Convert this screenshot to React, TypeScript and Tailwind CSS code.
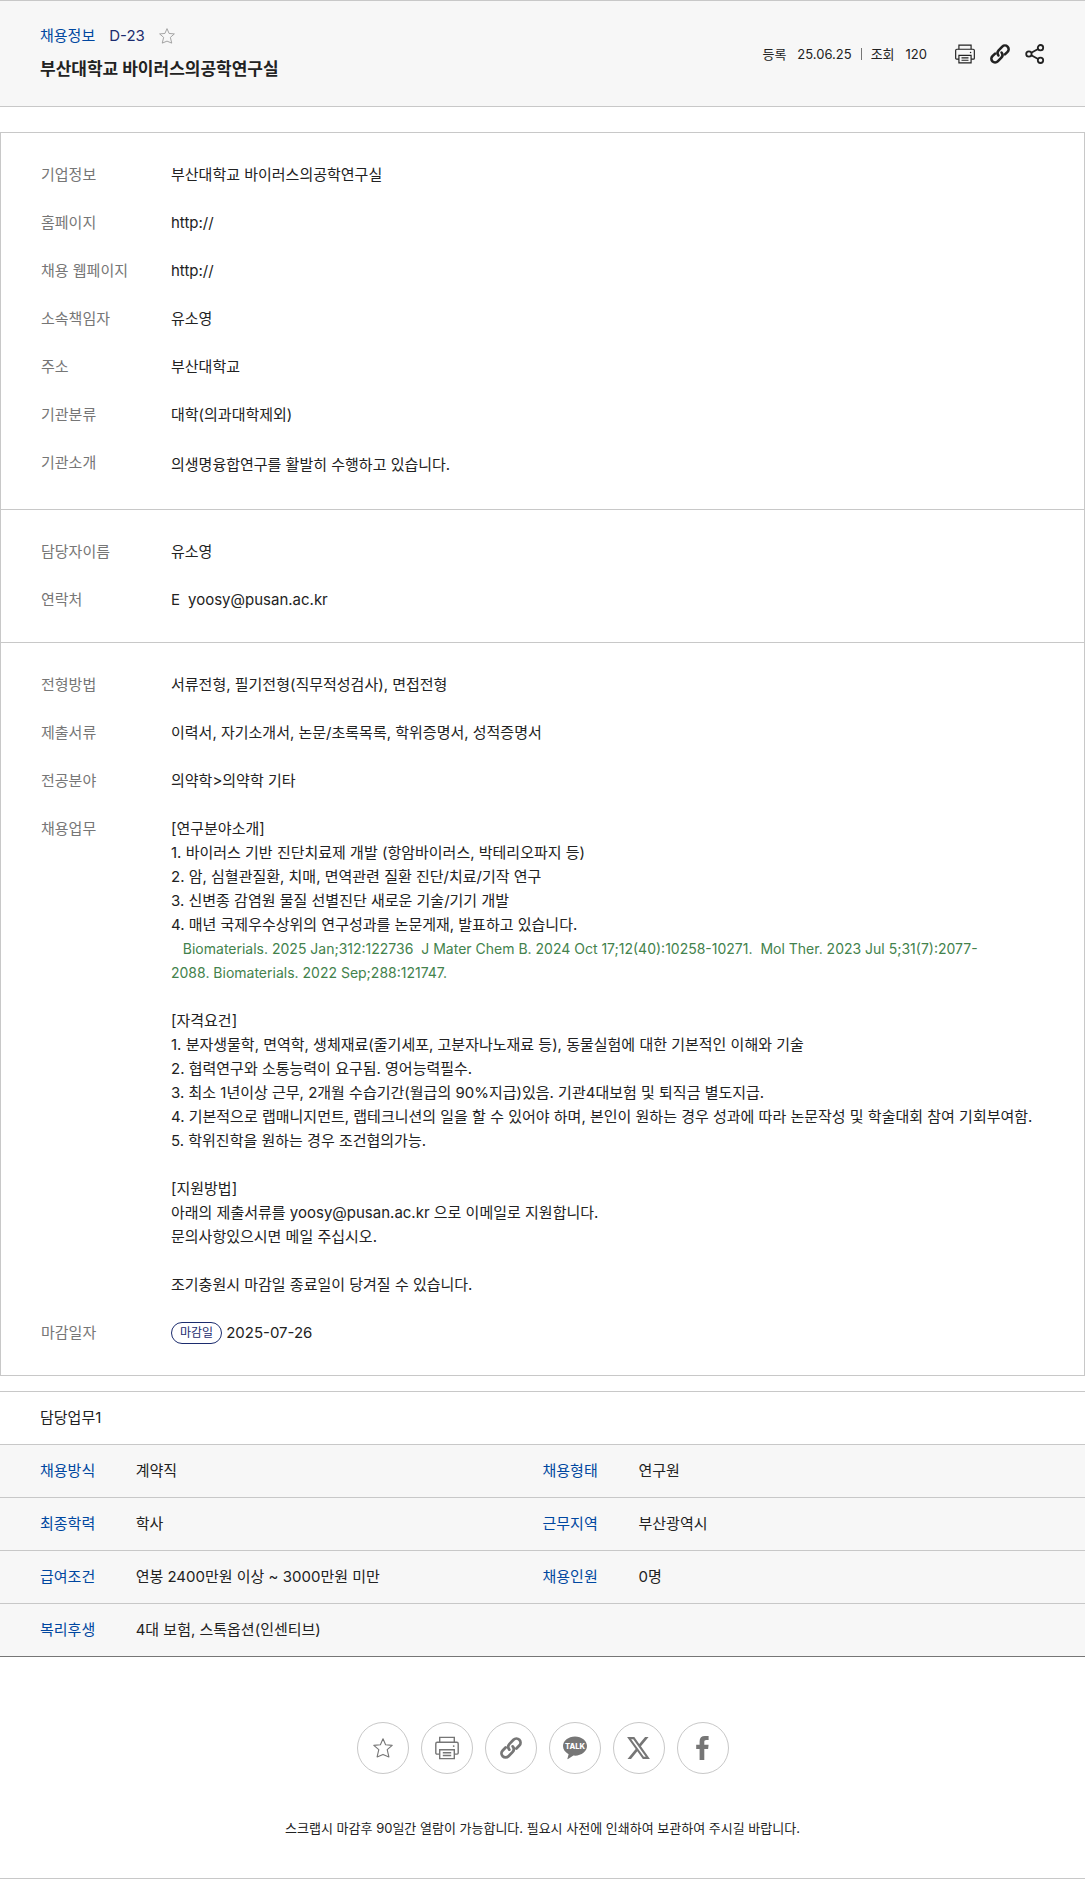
import type { ReactNode } from "react";

type Item = { label: string; value: ReactNode };

function StarIcon({ className }: { className?: string }) {
  return (
    <svg viewBox="0 0 20 20" className={className} fill="none" stroke="currentColor" strokeWidth="1.1" strokeLinejoin="round">
      <path d="M10 .8l2.6 6 6.6.6-5 4.3 1.7 7.2L10 16.4l-5.9 2.5 1.7-7.2-5-4.3 6.6-.6z" />
    </svg>
  );
}

function PrintIcon({ className }: { className?: string }) {
  return (
    <svg viewBox="0 0 24 23" className={className} fill="none" stroke="currentColor" strokeWidth="1.4">
      <path d="M4.7 5.8V.9h14.6v4.9" />
      <path d="M4.7 17.6H1.9a1.1 1.1 0 0 1-1.1-1.1V7.2c0-.8.6-1.4 1.4-1.4h19.6c.8 0 1.4.6 1.4 1.4v9.3c0 .6-.5 1.1-1.1 1.1h-2.8" />
      <path d="M4.7 13.2h14.6v8.9H4.7zM7.8 16.2h8.4M7.8 19h8.4" />
      <circle cx="18.7" cy="9.6" r=".9" fill="currentColor" stroke="none" />
    </svg>
  );
}

function LinkIcon({ className }: { className?: string }) {
  return (
    <svg viewBox="0 0 22 22" className={className} fill="none" stroke="currentColor" strokeWidth="2.8" strokeLinecap="round">
      <path d="M9.3 12.6a4.3 4.3 0 0 1 .2-5.7l4-4.1a4.1 4.1 0 0 1 5.8 5.8l-2.9 2.9" />
      <path d="M12.7 9.4a4.3 4.3 0 0 1-.2 5.7l-4 4.1a4.1 4.1 0 0 1-5.8-5.8l2.9-2.9" />
    </svg>
  );
}

function ShareIcon({ className }: { className?: string }) {
  return (
    <svg viewBox="0 0 20 20" className={className} fill="none" stroke="currentColor" strokeWidth="1.8">
      <circle cx="15.5" cy="3.7" r="2.7" />
      <circle cx="3.9" cy="10" r="2.7" />
      <circle cx="15.5" cy="16.3" r="2.7" />
      <path d="M6.3 8.7l6.8-3.7M6.3 11.3l6.8 3.7" />
    </svg>
  );
}

function TalkIcon({ className }: { className?: string }) {
  return (
    <svg viewBox="0 0 24 23" className={className} fill="currentColor">
      <path d="M12 0C5.4 0 0 4.3 0 9.6c0 3.4 2.2 6.4 5.6 8.1l-1.2 4.5c-.1.4.3.7.7.4l5.3-3.5c.5.1 1.1.1 1.6.1 6.6 0 12-4.3 12-9.6S18.6 0 12 0z" />
      <text x="12" y="12.5" textAnchor="middle" fontSize="7.5" fontWeight="800" fontFamily="Inter, sans-serif" fill="#fff">
        TALK
      </text>
    </svg>
  );
}

function XIcon({ className }: { className?: string }) {
  return (
    <svg viewBox="1.2 2.2 21.7 19.6" preserveAspectRatio="none" className={className} fill="currentColor">
      <path d="M18.244 2.25h3.308l-7.227 8.26 8.502 11.24H16.17l-5.214-6.817L4.99 21.75H1.68l7.73-8.835L1.254 2.25H8.08l4.713 6.231zm-1.161 17.52h1.833L7.084 4.126H5.117z" />
    </svg>
  );
}

function FacebookIcon({ className }: { className?: string }) {
  return (
    <svg viewBox="0 0 13 24" className={className} fill="currentColor">
      <path d="M3.6 24V13H.2V8.8h3.4V5.2C3.6 1.8 5.6 0 8.9 0h3.7v3.9h-2.4c-1.4 0-1.9.7-1.9 1.9v3h4.3L12.1 13H8.3v11z" />
    </svg>
  );
}

const company: Item[] = [
  { label: "기업정보", value: "부산대학교 바이러스의공학연구실" },
  { label: "홈페이지", value: <a href="#homepage">http://</a> },
  { label: "채용 웹페이지", value: <a href="#recruit">http://</a> },
  { label: "소속책임자", value: "유소영" },
  { label: "주소", value: "부산대학교" },
  { label: "기관분류", value: "대학(의과대학제외)" },
  { label: "기관소개", value: <p className="leading-7">의생명융합연구를 활발히 수행하고 있습니다.</p> },
];

const contact: Item[] = [
  { label: "담당자이름", value: "유소영" },
  {
    label: "연락처",
    value: (
      <span className="flex gap-2">
        <span>E</span>
        <span>yoosy@pusan.ac.kr</span>
      </span>
    ),
  },
];

const research = [
  "[연구분야소개]",
  "1. 바이러스 기반 진단치료제 개발 (항암바이러스, 박테리오파지 등)",
  "2. 암, 심혈관질환, 치매, 면역관련 질환 진단/치료/기작 연구",
  "3. 신변종 감염원 물질 선별진단 새로운 기술/기기 개발",
  "4. 매년 국제우수상위의 연구성과를 논문게재, 발표하고 있습니다.",
];

const requirements = [
  "[자격요건]",
  "1. 분자생물학, 면역학, 생체재료(줄기세포, 고분자나노재료 등), 동물실험에 대한 기본적인 이해와 기술",
  "2. 협력연구와 소통능력이 요구됨. 영어능력필수.",
  "3. 최소 1년이상 근무, 2개월 수습기간(월급의 90%지급)있음. 기관4대보험 및 퇴직금 별도지급.",
  "4. 기본적으로 랩매니지먼트, 랩테크니션의 일을 할 수 있어야 하며, 본인이 원하는 경우 성과에 따라 논문작성 및 학술대회 참여 기회부여함.",
  "5. 학위진학을 원하는 경우 조건협의가능.",
];

const howToApply = [
  "[지원방법]",
  "아래의 제출서류를 yoosy@pusan.ac.kr 으로 이메일로 지원합니다.",
  "문의사항있으시면 메일 주십시오.",
];

function Lines({ lines }: { lines: string[] }) {
  return (
    <div>
      {lines.map((line) => (
        <p key={line}>{line}</p>
      ))}
    </div>
  );
}

const recruit: Item[] = [
  { label: "전형방법", value: "서류전형, 필기전형(직무적성검사), 면접전형" },
  { label: "제출서류", value: "이력서, 자기소개서, 논문/초록목록, 학위증명서, 성적증명서" },
  { label: "전공분야", value: "의약학>의약학 기타" },
  {
    label: "채용업무",
    value: (
      <div className="flex flex-col gap-6">
        <div>
          <Lines lines={research} />
          <p className="text-sm leading-6 text-[#43824c]">
            {"\u00a0\u00a0\u00a0Biomaterials. 2025 Jan;312:122736\u00a0 J Mater Chem B. 2024 Oct 17;12(40):10258-10271.\u00a0 Mol Ther. 2023 Jul 5;31(7):2077-2088.\u00a0Biomaterials. 2022 Sep;288:121747."}
          </p>
        </div>
        <Lines lines={requirements} />
        <Lines lines={howToApply} />
        <p>조기충원시 마감일 종료일이 당겨질 수 있습니다.</p>
      </div>
    ),
  },
  {
    label: "마감일자",
    value: (
      <span className="flex items-center gap-1">
        <span className="flex h-[22px] items-center rounded-full border border-[#1c2c6e] px-2 text-xs text-[#1c2c6e]">마감일</span>
        <span>2025-07-26</span>
      </span>
    ),
  },
];

const duties = [
  ["채용방식", "계약직", "채용형태", "연구원"],
  ["최종학력", "학사", "근무지역", "부산광역시"],
  ["급여조건", "연봉 2400만원 이상 ~ 3000만원 미만", "채용인원", "0명"],
  ["복리후생", "4대 보험, 스톡옵션(인센티브)", "", ""],
];

function InfoSection({ items }: { items: Item[] }) {
  return (
    <dl className="flex flex-col gap-6 border-b border-[#c8c8c8] px-10 py-[30px]">
      {items.map((item) => (
        <div key={item.label} className="flex">
          <dt className="w-[130px] shrink-0 text-[#767676]">{item.label}</dt>
          <dd className="min-w-0 flex-1">{item.value}</dd>
        </div>
      ))}
    </dl>
  );
}

const shareButtons = [
  { label: "스크랩", icon: <StarIcon className="size-5" /> },
  { label: "인쇄", icon: <PrintIcon className="size-6" /> },
  { label: "링크 복사", icon: <LinkIcon className="size-[22px]" /> },
  { label: "카카오톡 공유", icon: <TalkIcon className="size-6" /> },
  { label: "X 공유", icon: <XIcon className="h-[22px] w-[23px]" /> },
  { label: "페이스북 공유", icon: <FacebookIcon className="h-6 w-[13px]" /> },
];

export default function App() {
  return (
    <div className="border-b border-[#c8c8c8] bg-white font-['Inter','Noto_Sans_CJK_KR',sans-serif] text-[15px] leading-6 text-[#222]">
      <header className="flex items-center justify-between border-y border-[#c8c8c8] bg-[#f7f7f7] px-10 py-[23px]">
        <div>
          <div className="flex items-center gap-[14px]">
            <span className="text-[#0047a0]">채용정보</span>
            <span className="text-[#1c2c6e]">D-23</span>
            <button type="button" aria-label="스크랩" className="text-[#999]">
              <StarIcon className="size-4" />
            </button>
          </div>
          <h1 className="mt-[7px] text-[17px] leading-7 font-bold">부산대학교 바이러스의공학연구실</h1>
        </div>
        <div className="flex items-center">
          <dl className="flex items-center text-[13px]">
            <dt>등록</dt>
            <dd className="ml-[11px]">25.06.25</dd>
            <dt className="ml-[9px] flex items-center gap-[9px] before:h-3 before:w-px before:bg-[#767676]">조회</dt>
            <dd className="ml-[11px]">120</dd>
          </dl>
          <div className="ml-7 flex items-center gap-[15px]">
            <button type="button" aria-label="인쇄">
              <PrintIcon className="size-5" />
            </button>
            <button type="button" aria-label="링크 복사">
              <LinkIcon className="size-5" />
            </button>
            <button type="button" aria-label="공유">
              <ShareIcon className="size-5" />
            </button>
          </div>
        </div>
      </header>

      <main>
        <div className="mt-[25px] border border-b-0 border-[#c8c8c8]">
          <InfoSection items={company} />
          <InfoSection items={contact} />
          <InfoSection items={recruit} />
        </div>

        <table className="mt-[15px] w-full table-fixed border-t border-b border-t-[#c8c8c8] border-b-[#767676] text-left">
          <caption className="h-[53px] border-t border-[#c8c8c8] pt-3.5 pl-10 text-left">담당업무1</caption>
          <colgroup>
            <col className="w-[12.5%]" />
            <col className="w-[37.5%]" />
            <col className="w-24" />
            <col />
          </colgroup>
          <tbody>
            {duties.map(([label, value, label2, value2]) => (
              <tr key={label} className="h-[53px] border-t border-[#c8c8c8] bg-[#f7f7f7]">
                <th scope="row" className="pl-10 font-normal text-[#0047a0]">{label}</th>
                <td colSpan={label2 ? 1 : 3}>{value}</td>
                {label2 && (
                  <>
                    <th scope="row" className="font-normal text-[#0047a0]">{label2}</th>
                    <td>{value2}</td>
                  </>
                )}
              </tr>
            ))}
          </tbody>
        </table>

        <div className="mt-[65px] flex justify-center gap-3">
          {shareButtons.map((button) => (
            <button
              key={button.label}
              type="button"
              aria-label={button.label}
              className="flex size-[52px] items-center justify-center rounded-full border border-[#c8c8c8] text-[#767676]"
            >
              {button.icon}
            </button>
          ))}
        </div>
      </main>

      <p className="pt-[42px] pb-[38px] text-center text-[13px]">
        스크랩시 마감후 90일간 열람이 가능합니다. 필요시 사전에 인쇄하여 보관하여 주시길 바랍니다.
      </p>
    </div>
  );
}
